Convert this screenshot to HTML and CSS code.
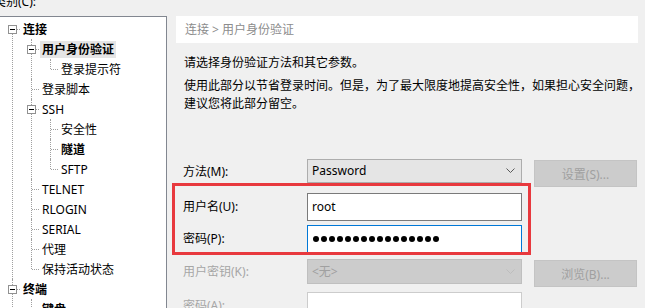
FILE: index.html
```html
<!DOCTYPE html>
<html lang="zh-CN">
<head>
<meta charset="utf-8">
<title>会话属性 - 用户身份验证</title>
<link rel="stylesheet" href="styles.css">
</head>
<body>
<div class="window">
  <div class="left">
    <div class="cat-label">类别(C):</div>
    <div class="tree-box">
      <ul class="tree">
        <li>
          <div class="node bold"><span class="exp"></span><span class="lbl">连接</span></div>
          <ul>
            <li>
              <div class="node bold"><span class="exp"></span><span class="lbl sel">用户身份验证</span></div>
              <ul>
                <li><div class="node"><span class="lbl">登录提示符</span></div></li>
              </ul>
            </li>
            <li><div class="node"><span class="lbl">登录脚本</span></div></li>
            <li>
              <div class="node"><span class="exp"></span><span class="lbl">SSH</span></div>
              <ul>
                <li><div class="node"><span class="lbl">安全性</span></div></li>
                <li><div class="node bold"><span class="lbl">隧道</span></div></li>
                <li><div class="node"><span class="lbl">SFTP</span></div></li>
              </ul>
            </li>
            <li><div class="node"><span class="lbl">TELNET</span></div></li>
            <li><div class="node"><span class="lbl">RLOGIN</span></div></li>
            <li><div class="node"><span class="lbl">SERIAL</span></div></li>
            <li><div class="node"><span class="lbl">代理</span></div></li>
            <li><div class="node"><span class="lbl">保持活动状态</span></div></li>
          </ul>
        </li>
        <li>
          <div class="node bold"><span class="exp"></span><span class="lbl">终端</span></div>
          <ul>
            <li><div class="node bold"><span class="lbl">键盘</span></div></li>
          </ul>
        </li>
      </ul>
    </div>
  </div>

  <div class="right">
    <div class="crumb">连接 &gt; 用户身份验证</div>
    <p class="desc first">请选择身份验证方法和其它参数。</p>
    <p class="desc">使用此部分以节省登录时间。但是，为了最大限度地提高安全性，如果担心安全问题，<br>建议您将此部分留空。</p>

    <div class="form">
      <div class="row r-method">
        <span class="label h24">方法(M):</span>
        <div class="select h24"><span class="val">Password</span><svg class="chev" width="9" height="6" viewBox="0 0 9 6"><path d="M0.5 0.5 L4.5 4.5 L8.5 0.5" fill="none" stroke="#5a5a5a" stroke-width="1"/></svg></div>
        <button class="btn" disabled>设置(S)...</button>
      </div>

      <div class="marked">
        <div class="row r-user">
          <span class="label h28">用户名(U):</span>
          <div class="input h28">root</div>
        </div>
        <div class="row r-pass">
          <span class="label h28">密码(P):</span>
          <div class="input h28 focus" aria-label="密码"><span class="dots"><i></i><i></i><i></i><i></i><i></i><i></i><i></i><i></i><i></i><i></i><i></i><i></i><i></i><i></i><i></i><i></i></span></div>
        </div>
        <div class="annot"></div>
      </div>

      <div class="row r-key">
        <span class="label h25 dis">用户密钥(K):</span>
        <div class="select h25 disabled"><span class="val">&lt;无&gt;</span><svg class="chev" width="9" height="6" viewBox="0 0 9 6"><path d="M0.5 0.5 L4.5 4.5 L8.5 0.5" fill="none" stroke="#bdbdbd" stroke-width="1"/></svg></div>
        <button class="btn" disabled>浏览(B)...</button>
      </div>

      <div class="row r-phrase">
        <span class="label h28 dis">密码(A):</span>
        <div class="input h28 disabled"></div>
      </div>
    </div>
  </div>
</div>
</body>
</html>
```

FILE: styles.css
```css
html, body {
  margin: 0;
  padding: 0;
  background: #f0f0f0;
  overflow: hidden;
}
body {
  width: 645px;
  height: 308px;
  font-family: "Noto Sans", "Noto Sans CJK SC", sans-serif;
  font-size: 12px;
  color: #000;
}
.window {
  display: flex;
  align-items: flex-start;
  height: 308px;
  overflow: hidden;
}

/* ---------- left: category tree ---------- */
.left {
  width: 173px;
  flex: none;
  margin-left: -6px;
  margin-top: -8px;
  display: flex;
  flex-direction: column;
}
.cat-label {
  height: 20px;
  line-height: 20px;
  margin-bottom: 4px;
  white-space: nowrap;
}
.tree-box {
  margin-left: 6px;
  height: 300px;
  background: #fff;
  border-top: 1px solid #828790;
  border-right: 1px solid #828790;
  box-sizing: border-box;
  padding-top: 2px;
  overflow: hidden;
}
.tree, .tree ul {
  list-style: none;
  margin: 0;
  padding: 0;
}
.tree ul {
  padding-left: 19px;
}
.tree li {
  position: relative;
}
.tree li::before {
  content: "";
  position: absolute;
  left: 12px;
  top: 0;
  bottom: 0;
  border-left: 1px dotted #a0a0a0;
}
.tree li:last-child::before {
  bottom: auto;
  height: 10px;
}
.tree > li:first-child::before {
  top: 10px;
}
.tree > li:last-child::before {
  bottom: 0;
  height: auto;
}
.node {
  position: relative;
  height: 20px;
  line-height: 20px;
  padding-left: 21px;
  white-space: nowrap;
}
.node::before {
  content: "";
  position: absolute;
  left: 13px;
  top: 10px;
  width: 7px;
  border-top: 1px dotted #a0a0a0;
}
.node.bold {
  font-weight: bold;
}
.lbl {
  display: inline-block;
  position: relative;
  padding: 0 2px;
  line-height: 16px;
  vertical-align: middle;
}
.lbl.sel {
  background: #e5e5e5;
  line-height: 17px;
}
.exp {
  position: absolute;
  z-index: 1;
  left: 8px;
  top: 6px;
  width: 9px;
  height: 9px;
  box-sizing: border-box;
  border: 1px solid #919191;
  background: #fff;
}
.exp::after {
  content: "";
  position: absolute;
  left: 1px;
  top: 3px;
  width: 5px;
  height: 1px;
  background: #000;
}

/* ---------- right: settings panel ---------- */
.right {
  width: 462px;
  flex: none;
  margin-left: 9px;
  margin-top: 16px;
}
.crumb {
  height: 27px;
  line-height: 27px;
  padding-left: 9px;
  background: #fff;
  color: #8c8c8c;
  white-space: nowrap;
}
.desc {
  margin: 5px 0 0;
  padding-left: 8px;
  line-height: 18px;
  white-space: nowrap;
}
.desc.first {
  margin-top: 11px;
}

.form {
  padding-top: 46px;
}
.row {
  display: flex;
  align-items: flex-start;
}
.label {
  width: 124px;
  flex: none;
  padding-left: 7px;
  white-space: nowrap;
}
.label.dis {
  color: #a6a6a6;
}
.h24 { height: 24px; line-height: 22px; }
.h25 { height: 25px; line-height: 23px; }
.h28 { height: 28px; line-height: 26px; }
.label.h24 { line-height: 26px; }
.label.h25 { line-height: 26px; }
.label.h28 { line-height: 28px; }

.select, .input {
  width: 215px;
  flex: none;
  box-sizing: border-box;
  padding-left: 4px;
  position: relative;
  white-space: nowrap;
}
.select {
  background: #e5e5e5;
  border: 1px solid #adadad;
}
.select.disabled {
  background: #cccccc;
  border-color: #bfbfbf;
  color: #a0a0a0;
}
.chev {
  position: absolute;
  right: 6px;
  top: 50%;
  margin-top: -3px;
}
.input {
  background: #fff;
  border: 1px solid #7a7a7a;
}
.input.focus {
  border-color: #0078d7;
}
.input.disabled {
  border-color: #cccccc;
}
.dots {
  display: flex;
  gap: 2px;
  height: 26px;
  align-items: center;
  padding-left: 1px;
}
.dots i {
  display: block;
  width: 6px;
  height: 6px;
  border-radius: 50%;
  background: #000;
}
.btn {
  flex: none;
  margin-left: 12px;
  margin-top: 1px;
  width: 103px;
  height: 27px;
  padding: 0;
  background: #cccccc;
  border: 1px solid #c4c4c4;
  color: #a0a0a0;
  font: inherit;
}

.r-method { height: 28px; }
.marked {
  position: relative;
  margin-top: 6px;
}
.r-pass { margin-top: 4px; }
.r-key { margin-top: 6px; height: 28px; }
.r-phrase { margin-top: 5px; }

.annot {
  position: absolute;
  left: -4px;
  top: -10px;
  width: 359px;
  height: 72px;
  box-sizing: border-box;
  border: 3px solid #e8393e;
  pointer-events: none;
}
```
